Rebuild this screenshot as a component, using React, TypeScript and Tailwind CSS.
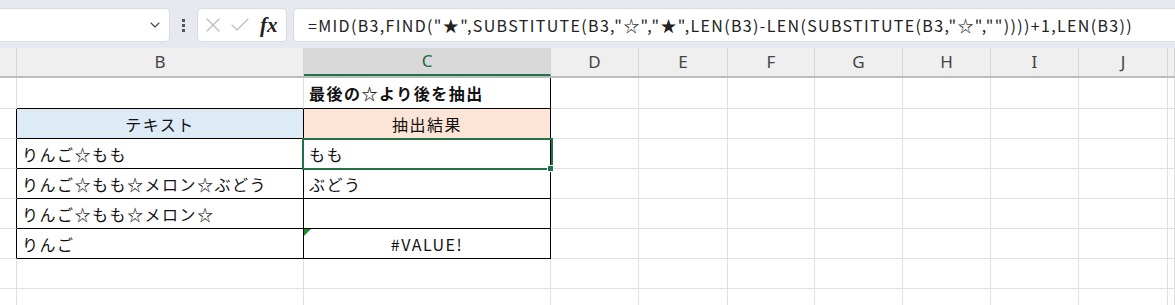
import { ChevronDown, X, Check } from 'lucide-react'

const jp = { fontFamily: '"Noto Sans CJK JP", "Noto Sans", sans-serif' }

const cols = [
  { key: 'A', w: 'w-[17px]' },
  { key: 'B', w: 'w-[287px]' },
  { key: 'C', w: 'w-[247px]' },
  { key: 'D', w: 'w-[88px]' },
  { key: 'E', w: 'w-[89px]' },
  { key: 'F', w: 'w-[87px]' },
  { key: 'G', w: 'w-[88px]' },
  { key: 'H', w: 'w-[88px]' },
  { key: 'I', w: 'w-[88px]' },
  { key: 'J', w: 'w-[89px]' },
  { key: 'K', w: 'flex-1' },
]

const formula =
  '=MID(B3,FIND("★",SUBSTITUTE(B3,"☆","★",LEN(B3)-LEN(SUBSTITUTE(B3,"☆",""))))+1,LEN(B3))'

type Cell = { text?: string; cls?: string; align?: 'left' | 'center'; bold?: boolean; error?: boolean }

// rows 1..8, only B and C carry content; table rows get black borders
const rows: { b?: Cell; c?: Cell; table?: boolean; topLine?: boolean }[] = [
  { c: { text: '最後の☆より後を抽出', bold: true }, topLine: true },
  { b: { text: 'テキスト', align: 'center', cls: 'bg-[#ddebf7]' }, c: { text: '抽出結果', align: 'center', cls: 'bg-[#fce4d6]' }, table: true },
  { b: { text: 'りんご☆もも' }, c: { text: 'もも' }, table: true },
  { b: { text: 'りんご☆もも☆メロン☆ぶどう' }, c: { text: 'ぶどう' }, table: true },
  { b: { text: 'りんご☆もも☆メロン☆' }, c: {}, table: true },
  { b: { text: 'りんご' }, c: { text: '#VALUE!', align: 'center', error: true }, table: true },
  {},
  {},
]

function DataCell({ cell, w, border }: { cell?: Cell; w: string; border: string }) {
  return (
    <div
      className={`relative ${w} h-full shrink-0 border-r border-b ${border} flex items-center ${
        cell?.align === 'center' ? 'justify-center' : 'justify-start pl-[5px]'
      } ${cell?.cls ?? ''}`}
    >
      {cell?.error && (
        <div className="absolute left-0 top-0 w-0 h-0 border-t-[7px] border-t-[#1f8a2f] border-r-[7px] border-r-transparent" />
      )}
      <span
        className={`text-[16px] tracking-[1.5px] text-[#111] whitespace-nowrap ${cell?.bold ? 'font-bold' : ''}`}
        style={jp}
      >
        {cell?.text}
      </span>
    </div>
  )
}

export default function App() {
  return (
    <div className="w-[1175px] h-[305px] overflow-hidden bg-white">
      {/* formula bar */}
      <div className="h-[48px] bg-[#e6e9ef] flex items-center pt-[2px]">
        <div className="w-[170px] h-[34px] bg-white rounded-r-[5px] border border-l-0 border-[#d9dce2] flex items-center justify-end pr-[6px]">
          <ChevronDown className="w-[16px] h-[16px] text-[#444]" strokeWidth={1.6} />
        </div>
        <div className="w-[27px] flex flex-col items-center gap-[2px]">
          <span className="w-[3px] h-[3px] bg-[#555]" />
          <span className="w-[3px] h-[3px] bg-[#555]" />
          <span className="w-[3px] h-[3px] bg-[#555]" />
        </div>
        <div className="w-[90px] h-[34px] bg-white rounded-[5px] border border-[#d9dce2] flex items-center pl-[3px]">
          <X className="w-[24px] h-[24px] text-[#bdbdbd]" strokeWidth={1.2} />
          <Check className="w-[24px] h-[24px] text-[#bdbdbd] ml-[3px]" strokeWidth={1.2} />
          <span
            className="ml-[8px] text-[21px] italic font-bold text-[#222] leading-none"
            style={{ fontFamily: '"Liberation Serif", serif' }}
          >
            fx
          </span>
        </div>
        <div className="ml-[6px] flex-1 h-[34px] bg-white rounded-l-[5px] border border-r-0 border-[#d9dce2] flex items-center pl-[14px]">
          <span className="text-[16px] text-[#222] whitespace-nowrap tracking-[1.35px]" style={jp}>
            {formula}
          </span>
        </div>
      </div>

      {/* column headers */}
      <div className="h-[30px] flex bg-[#efefef] border-b-2 border-[#bdbdbd]">
        {cols.map((c) => (
          <div
            key={c.key}
            className={`${c.w} shrink-0 h-full border-r border-[#d4d4d4] flex items-center justify-center text-[17px] ${
              c.key === 'C' ? 'bg-[#d9d9d9] text-[#1e6b3c] border-b-2 border-b-[#217346] -mb-[2px] h-[30px]' : 'text-[#444]'
            }`}
            style={{ fontFamily: '"Noto Sans", sans-serif' }}
          >
            {c.key === 'A' || c.key === 'K' ? '' : c.key}
          </div>
        ))}
      </div>

      {/* grid */}
      <div className="relative">
        {rows.map((r, i) => (
          <div key={i} className={`flex ${i === 0 ? 'h-[31px]' : 'h-[30px]'}`}>
            {cols.map((c) => {
              if (c.key === 'A')
                return (
                  <div
                    key={c.key}
                    className={`${c.w} shrink-0 h-full border-r border-b border-b-[#e1e1e1] ${
                      r.table ? 'border-r-black' : 'border-r-[#e1e1e1]'
                    }`}
                  />
                )
              if (c.key === 'B' || c.key === 'C') {
                const border = r.table
                  ? 'border-black'
                  : r.topLine
                    ? `border-b-black ${c.key === 'C' ? 'border-r-black' : 'border-r-[#e1e1e1]'}`
                    : 'border-[#e1e1e1]'
                return <DataCell key={c.key} cell={c.key === 'B' ? r.b : r.c} w={c.w} border={border} />
              }
              return <div key={c.key} className={`${c.w} shrink-0 h-full border-r border-b border-[#e1e1e1]`} />
            })}
          </div>
        ))}

        {/* active cell C3 */}
        <div className="absolute left-[302px] top-[60px] w-[251px] h-[32px] border-2 border-[#217346] pointer-events-none" />
        <div className="absolute left-[547px] top-[87px] w-[7px] h-[7px] bg-[#217346] border border-white pointer-events-none" />
      </div>
    </div>
  )
}
